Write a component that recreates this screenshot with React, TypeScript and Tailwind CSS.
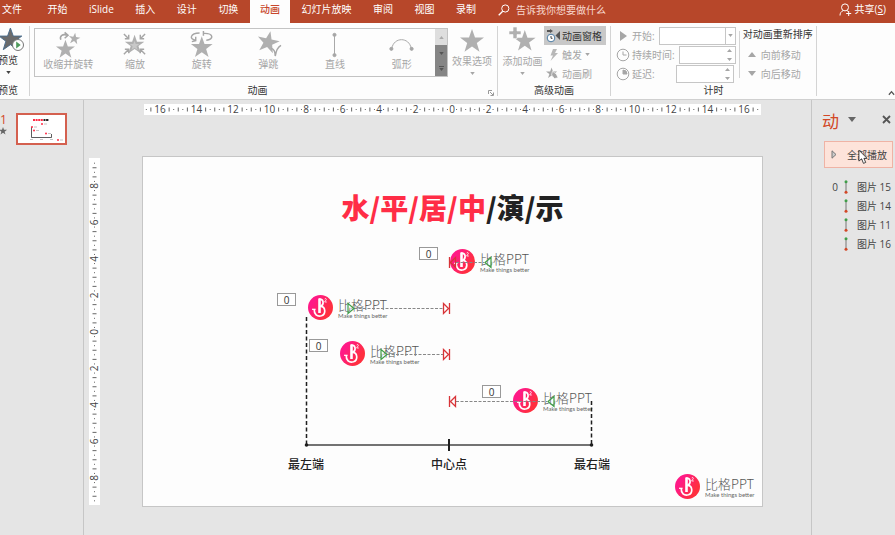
import React from "react";

const STAR = "M12 0l3 8.500h9l-7.200 5.400 2.700 8.900L12 17.500l-7.500 5.300 2.700-8.900L0 8.500h9z";

function Star({ className = "size-5 fill-[#b0b0b0]" }: { className?: string }) {
  return (
    <svg viewBox="0 0 24 24" className={className} aria-hidden="true">
      <path d={STAR} />
    </svg>
  );
}

function Caret({ className = "fill-[#a6a6a6]" }: { className?: string }) {
  return (
    <svg viewBox="0 0 6 4" className={`h-[3px] w-[5px] ${className}`} aria-hidden="true">
      <path d="M0 0h6L3 4z" />
    </svg>
  );
}

/* ---------- Title bar tabs ---------- */

const tabs = ["开始", "iSlide", "插入", "设计", "切换", "动画", "幻灯片放映", "审阅", "视图", "录制"];

function TabBar() {
  return (
    <header className="flex h-[23px] items-stretch bg-[#b7472a] text-white">
      <nav className="flex w-[486px] justify-between">
        <button className="w-[36px] pb-[5px] pl-[2px] text-left">文件</button>
        {tabs.map((tab) => (
          <button
            key={tab}
            className={
              tab === "动画"
                ? "bg-[#fdfdfd] px-[10px] pb-[5px] font-medium text-[#c8472c]"
                : "px-[10px] pb-[5px]"
            }
          >
            {tab}
          </button>
        ))}
      </nav>
      <label className="ml-[12px] flex items-center gap-[6px] pb-[4px]">
        <svg viewBox="0 0 12 12" className="size-[12px] fill-none stroke-white" aria-hidden="true">
          <circle cx="7.3" cy="4.5" r="3.6" />
          <path d="M4.7 7.2L.7 11.3" strokeWidth="1.3" />
        </svg>
        <input
          className="w-[100px] bg-transparent text-white outline-none placeholder:text-[#f7d8cf] placeholder:opacity-100"
          placeholder="告诉我你想要做什么"
        />
      </label>
      <button className="mr-[9px] ml-auto flex items-center gap-[3px] pb-[5px]">
        <svg viewBox="0 0 13 13" className="size-[13px] fill-none stroke-white" aria-hidden="true">
          <circle cx="6" cy="4.4" r="3.5" />
          <path d="M1 12.5c0-2.500 1.200-4 3-4.800M8 7.600l1.500 1M9.700 8v5M7.200 10.500h5" />
        </svg>
        <span>
          共享(<u>S</u>)
        </span>
      </button>
    </header>
  );
}

/* ---------- Ribbon ---------- */

function ShrinkTurnIcon() {
  return (
    <svg viewBox="0 0 28 28" className="size-[27px] fill-[#b0b0b0]" aria-hidden="true">
      <g transform="translate(1 9) scale(.82)"><path d={STAR} /></g>
      <g transform="translate(15 1) rotate(8) scale(.5)"><path d={STAR} /></g>
      <path d="M6 9c-1.500-4 2-6.500 7-4.500M10 1.500l3.500 3L10 7.500" className="fill-none stroke-[#a6a6a6]" strokeWidth="1.600" />
    </svg>
  );
}

function ZoomIcon() {
  return (
    <svg viewBox="0 0 28 28" className="size-[27px] fill-[#b0b0b0]" aria-hidden="true">
      <g transform="translate(4 4) scale(.84)"><path d={STAR} /></g>
      <g transform="translate(9 10) scale(.42)" className="fill-[#c8c8c8]"><path d={STAR} /></g>
      <path
        d="M3 3l5 5M8 4v4H4M25 3l-5 5M20 4v4h4M3 24l5-5M8 23v-4H4M25 24l-5-5M20 23v-4h4"
        className="fill-none stroke-[#a6a6a6]"
        strokeWidth="1.500"
      />
    </svg>
  );
}

function SpinIcon() {
  return (
    <svg viewBox="0 0 28 28" className="size-[27px] fill-[#b0b0b0]" aria-hidden="true">
      <g transform="translate(3 5.500) scale(.94)"><path d={STAR} /></g>
      <path
        d="M12 2C2 2 1 9 8 9.500M8 6v4l-4 1M16 2.500C27 2 27 9 19 9.500M16 0v5"
        className="fill-none stroke-[#a6a6a6]"
        strokeWidth="1.500"
      />
    </svg>
  );
}

function BounceIcon() {
  return (
    <svg viewBox="0 0 28 28" className="size-[27px] fill-[#b0b0b0]" aria-hidden="true">
      <g transform="translate(2 0) rotate(12 12 12) scale(.96)"><path d={STAR} /></g>
      <path d="M17 18c3 1 4 4 4 8 1-6 4-10 6-11" className="fill-none stroke-[#a6a6a6]" strokeWidth="1.500" />
    </svg>
  );
}

function LineIcon() {
  return (
    <svg viewBox="0 0 28 28" className="size-[27px] fill-[#a6a6a6] stroke-[#a6a6a6]" aria-hidden="true">
      <path d="M14 4v20" />
      <circle cx="14" cy="4" r="1.600" />
      <circle cx="14" cy="25" r="1.600" />
    </svg>
  );
}

function ArcIcon() {
  return (
    <svg viewBox="0 0 28 28" className="size-[27px] stroke-[#a6a6a6]" aria-hidden="true">
      <path d="M4 18c2-12 18-12 20 0" fill="none" />
      <circle cx="3.500" cy="18.500" r="1.600" className="fill-[#a6a6a6]" />
      <circle cx="24.500" cy="18.500" r="1.600" className="fill-[#a6a6a6]" />
    </svg>
  );
}

const gallery = [
  { name: "收缩并旋转", Icon: ShrinkTurnIcon },
  { name: "缩放", Icon: ZoomIcon },
  { name: "旋转", Icon: SpinIcon },
  { name: "弹跳", Icon: BounceIcon },
  { name: "直线", Icon: LineIcon },
  { name: "弧形", Icon: ArcIcon },
];

function Group({ title, className, children }: { title: string; className: string; children: React.ReactNode }) {
  return (
    <section className={`flex shrink-0 flex-col justify-between border-r border-[#d4d4d4] ${className}`}>
      <div className="flex">{children}</div>
      <h2 className="text-center leading-[12px] text-[#333]">{title}</h2>
    </section>
  );
}

function Spinner({ id, className }: { id: string; className: string }) {
  return (
    <span className={`flex h-[18px] items-center border border-[#c6c6c6] bg-white pr-[3px] ${className}`}>
      <input id={id} disabled className="w-full min-w-0 flex-1 bg-transparent" />
      <svg viewBox="0 0 5 12" className="h-[12px] w-[5px] fill-[#a6a6a6]" aria-hidden="true">
        <path d="M0 3h5L2.500 0zM0 9h5L2.500 12z" />
      </svg>
    </span>
  );
}

function Ribbon() {
  return (
    <div className="flex h-[77px] border-b border-[#d0d0d0] bg-[#fdfdfd] pt-[3px] pb-[3px] text-[#a6a6a6]">
      <Group title="预览" className="w-[30px] pr-[12px] [&>h2]:-ml-[2px] [&>h2]:whitespace-nowrap">
        <button className="-ml-[2px] flex w-[20px] flex-col items-center whitespace-nowrap text-[#333]">
          <svg viewBox="0 0 27 27" className="-mr-[6px] size-[27px]" aria-hidden="true">
            <g transform="translate(1 2) scale(.95)"><path d={STAR} fill="#6b6b6b" stroke="#4a6d8c" /></g>
            <circle cx="20" cy="19" r="5.500" fill="#fff" stroke="#777" />
            <path d="M18.200 15.500v7l4.500-3.500z" fill="#4f9a5c" />
          </svg>
          <span className="leading-[14px]">预览</span>
          <Caret className="mt-[4px] fill-[#444]" />
        </button>
      </Group>

      <Group title="动画" className="relative w-[468px] [&>h2]:pr-[12px]">
        <div className="mt-[2px] ml-[4px] flex h-[49px] w-[414px] border border-[#c3c3c3]">
          <div className="grid flex-1 grid-cols-6">
            {gallery.map(({ name, Icon }) => (
              <button key={name} className="flex flex-col items-center pt-[2px] whitespace-nowrap">
                <Icon />
                <span className="leading-[12px]">{name}</span>
              </button>
            ))}
          </div>
          <div className="flex w-[12px] flex-col bg-[#858585]">
            <button aria-label="向上滚动" className="flex h-[16px] items-center justify-center bg-[#dedede]">
              <Caret className="rotate-180 fill-[#aaa]" />
            </button>
            <button aria-label="向下滚动" className="flex h-[16px] items-center justify-center">
              <Caret className="fill-[#555]" />
            </button>
            <button aria-label="更多动画" className="flex flex-1 flex-col items-center justify-center gap-px">
              <span className="h-px w-[5px] bg-[#555]" />
              <Caret className="fill-[#555]" />
            </button>
          </div>
        </div>
        <button className="ml-[3px] flex w-[42px] flex-col items-center whitespace-nowrap">
          <Star className="mt-[3px] mb-px size-[24px] fill-[#b0b0b0]" />
          <span className="leading-[14px]">效果选项</span>
          <Caret className="mt-[4px] fill-[#a6a6a6]" />
        </button>
        <button aria-label="动画设置" className="absolute right-[3px] bottom-0">
          <svg viewBox="0 0 6 6" className="size-[6px] fill-none stroke-[#999]" aria-hidden="true">
            <path d="M.5 4V.5H4M2 2l3 3M5.500 2.500v3h-3" />
          </svg>
        </button>
      </Group>

      <Group title="高级动画" className="w-[113px]">
        <button className="ml-[4px] flex w-[41px] flex-col items-center whitespace-nowrap">
          <svg viewBox="0 0 28 28" className="size-[28px] fill-[#b0b0b0]" aria-hidden="true">
            <g transform="translate(5 4) scale(.9)"><path d={STAR} /></g>
            <path d="M4 1h4v4h4v3.500H8v4H4v-4H0V5h4z" stroke="#fdfdfd" strokeWidth=".6" />
          </svg>
          <span className="leading-[14px]">添加动画</span>
          <Caret className="mt-[4px] fill-[#a6a6a6]" />
        </button>
        <div className="ml-px flex flex-col">
          <button className="flex h-[19px] w-[62px] items-center gap-[2px] bg-[#c8c8c8] pl-[2px] whitespace-nowrap text-[#333]">
            <svg viewBox="0 0 14 14" className="size-[14px]" aria-hidden="true">
              <path d="M1 1h3V0l3 2-3 2V3H1z" fill="#555" />
              <path d="M14 2v9L9.500 6.500z" fill="#555" />
              <circle cx="5" cy="9" r="3.800" fill="#fff" stroke="#4b7ba3" />
              <path d="M5 7v2.300h1.500" fill="none" stroke="#444" />
            </svg>
            动画窗格
          </button>
          <button className="flex h-[19px] items-center gap-[3px] pl-[5px]">
            <svg viewBox="0 0 10 12" className="h-[12px] w-[10px] fill-[#b8b8b8]" aria-hidden="true">
              <path d="M4 0h4L6 4h3L1.500 12 4 6.500H1.500z" />
            </svg>
            触发
            <Caret />
          </button>
          <button className="flex h-[19px] items-center gap-[3px] pl-[2px]">
            <svg viewBox="0 0 14 13" className="h-[13px] w-[13px] fill-[#a6a6a6]" aria-hidden="true">
              <g transform="scale(.5)"><path d={STAR} /></g>
              <path d="M7 4l4 3 2 4-4 1-3-4z" stroke="#fdfdfd" strokeWidth=".7" />
            </svg>
            动画刷
          </button>
        </div>
      </Group>

      <Group title="计时" className="w-[206px]">
        <div className="flex flex-col pl-[5px]">
          <div className="flex h-[19px] items-center">
            <svg viewBox="0 0 14 14" className="mr-[2px] size-[14px] fill-[#a6a6a6]" aria-hidden="true">
              <path d="M4 2l7 5-7 5z" />
            </svg>
            <label htmlFor="start" className="mr-auto">开始:</label>
            <select
              id="start"
              disabled
              className="h-[18px] w-[77px] appearance-none border border-[#c6c6c6] bg-white"
            />
            <span className="-ml-[11px] flex h-[18px] w-[11px] items-center justify-center border border-[#c6c6c6]">
              <Caret />
            </span>
          </div>
          <div className="flex h-[19px] items-center">
            <svg viewBox="0 0 14 14" className="mr-[2px] size-[14px] fill-none stroke-[#a6a6a6]" aria-hidden="true">
              <circle cx="7" cy="7" r="5.800" />
              <path d="M7 3.500V7h3.500" />
            </svg>
            <label htmlFor="duration" className="mr-[4px]">持续时间:</label>
            <Spinner id="duration" className="w-[57px]" />
          </div>
          <div className="flex h-[19px] items-center">
            <svg viewBox="0 0 14 14" className="mr-[2px] size-[14px] fill-none stroke-[#a6a6a6]" aria-hidden="true">
              <circle cx="7" cy="7" r="5.800" />
              <path d="M7 3v4h4a4 4 0 0 0-4-4z" fill="#a6a6a6" />
            </svg>
            <label htmlFor="delay" className="mr-auto">延迟:</label>
            <Spinner id="delay" className="mr-[2px] w-[58px]" />
          </div>
        </div>
        <div className="my-[5px] ml-[3px] w-px bg-[#d4d4d4]" />
        <div className="ml-[3px] flex flex-col whitespace-nowrap">
          <h3 className="h-[19px] leading-[17px] text-[#333]">对动画重新排序</h3>
          <button className="flex h-[19px] items-center gap-[5px] pl-[5px]">
            <svg viewBox="0 0 8 5" className="h-[5px] w-[8px] fill-[#a6a6a6]" aria-hidden="true"><path d="M0 5h8L4 0z" /></svg>
            向前移动
          </button>
          <button className="flex h-[19px] items-center gap-[5px] pl-[5px]">
            <svg viewBox="0 0 8 5" className="h-[5px] w-[8px] fill-[#a6a6a6]" aria-hidden="true"><path d="M0 0h8L4 5z" /></svg>
            向后移动
          </button>
        </div>
      </Group>

      <button aria-label="折叠功能区" className="mt-auto ml-auto shrink-0">
        <svg viewBox="0 0 8 6" className="h-[6px] w-[7px] fill-none stroke-[#555]" strokeWidth="1.500" aria-hidden="true">
          <path d="M1 5l3-3.500L7 5" />
        </svg>
      </button>
    </div>
  );
}

/* ---------- Rulers ---------- */

const CM = 18.25;

function Ruler({ length, origin, vertical = false }: { length: number; origin: number; vertical?: boolean }) {
  const marks: React.ReactNode[] = [];
  for (let q = -68; q <= 68; q++) {
    const p = origin + (q * CM) / 4;
    if (p < 1 || p > length - 1) continue;
    if (q % 8 === 0) {
      const n = Math.abs(q / 4);
      marks.push(
        vertical ? (
          <text key={q} transform={`translate(9 ${p}) rotate(-90)`} textAnchor="middle">{n}</text>
        ) : (
          <text key={q} x={p} y="9" textAnchor="middle">{n}</text>
        ),
      );
      continue;
    }
    // Two-digit labels are wide enough to cover the dots beside them.
    if (Math.abs(q) > 36 && !vertical && (Math.abs(q % 8) === 1 || Math.abs(q % 8) === 7)) continue;
    const half = q % 2 === 0 ? 2 : 0.5;
    marks.push(
      <path key={q} stroke="#666" d={vertical ? `M${5.5 - half} ${p}h${half * 2}` : `M${p} ${5.5 - half}v${half * 2}`} />,
    );
  }
  return (
    <svg
      width={vertical ? 11 : length}
      height={vertical ? length : 11}
      className="shrink-0 overflow-visible bg-white fill-[#444] text-[10px]"
      aria-hidden="true"
    >
      {marks}
    </svg>
  );
}

/* ---------- Slide ---------- */

function LogoMark() {
  return (
    <svg viewBox="0 0 25 25" className="size-[25px] shrink-0" aria-hidden="true">
      <defs>
        <linearGradient id="brand" x1="0" y1="0.2" x2="1" y2="0.8">
          <stop offset="0.2" stopColor="#ff1a86" />
          <stop offset="0.8" stopColor="#ff2f3f" />
        </linearGradient>
      </defs>
      <circle cx="12.500" cy="12.500" r="12.500" fill="url(#brand)" />
      <g fill="none" stroke="#fff">
        <path d="M11.500 3.500V18" strokeWidth="2.600" />
        <path d="M11 4.200c5-.8 5.500 5.800 1 7.300 5.500-.6 6.500 7.500 1.500 9.300-4.500 1.400-7.500-1.500-7.300-6.800" strokeWidth="1.700" />
        <path d="M4 14.300h3.600" strokeWidth="1.200" />
        <path d="M16.600 4.200c.6-1.200 2.200-.6 1.600.6L16.600 7h2.200" strokeWidth=".8" />
      </g>
    </svg>
  );
}

function Logo({ className }: { className: string }) {
  return (
    <div className={`absolute flex items-center gap-[5px] whitespace-nowrap ${className}`}>
      <LogoMark />
      <div className="font-['Noto_Sans_CJK_SC',sans-serif] font-light">
        <p className="text-[13px] leading-[15px] text-[#555]">比格PPT</p>
        <p className="font-[Lato,sans-serif] text-[6px] leading-[7px] font-normal text-[#666]">Make things better</p>
      </div>
    </div>
  );
}

function Tag({ className }: { className: string }) {
  return (
    <span
      className={`absolute flex h-[13px] w-[19px] items-center justify-center border border-[#999] bg-white text-[#333] ${className}`}
    >
      0
    </span>
  );
}

function MotionPaths() {
  const leftEnd = "M.5-5.500v11M6.500-5l-5 5 5 5z";
  const rightEnd = "M6.500-5.500v11M.5-5l5 5-5 5z";
  return (
    <svg viewBox="0 0 619 349" className="absolute inset-0 h-[349px] w-[619px] fill-none" aria-hidden="true">
      <g stroke="#1f1f1f">
        <path d="M163.500 160v127M448.500 244v43" strokeWidth="1.500" strokeDasharray="4 2.500" />
        <path d="M163 288h286" stroke="#444" strokeWidth="1.500" />
        <path d="M306 282v12" strokeWidth="2" />
        <circle cx="163.500" cy="288" r="1.800" fill="#1f1f1f" stroke="none" />
        <circle cx="448.500" cy="288" r="1.800" fill="#1f1f1f" stroke="none" />
      </g>
      <path
        d="M313 105.500h28M211 151.500h89M244 197.500h56M313 244.500h91"
        stroke="#888"
        strokeDasharray="3 1.500"
      />
      <g stroke="#d83438" strokeWidth="1.300">
        <path d={leftEnd} transform="translate(306 105.500)" />
        <path d={rightEnd} transform="translate(300 151.500)" />
        <path d={rightEnd} transform="translate(300 197.500)" />
        <path d={leftEnd} transform="translate(306 244.500)" />
      </g>
      <g stroke="#3f9e48" strokeWidth="1.200">
        <path d="M348 100.500v10l-6-5z" />
        <path d="M205 146.500v10l6-5z" />
        <path d="M238 192.500v10l6-5z" />
        <path d="M411 239.500v10l-6-5z" />
      </g>
    </svg>
  );
}

function Slide() {
  return (
    <article className="relative h-[351px] w-[621px] shrink-0 border border-[#c6c6c6] bg-[#fdfdfd]">
      <h1 className="pt-[30px] text-center font-['Noto_Sans_CJK_SC',sans-serif] text-[28px] leading-[40px] font-black text-[#222]">
        <span className="text-[#ff2d46]">水/平/居/中</span>/演/示
      </h1>
      <Logo className="top-[92px] left-[307px]" />
      <Logo className="top-[138px] left-[165px]" />
      <Logo className="top-[184px] left-[197px]" />
      <Logo className="top-[231px] left-[370px]" />
      <Logo className="top-[317px] left-[532px]" />
      <MotionPaths />
      <Tag className="top-[90px] left-[276px]" />
      <Tag className="top-[136px] left-[134px]" />
      <Tag className="top-[182px] left-[166px]" />
      <Tag className="top-[228px] left-[339px]" />
      <div className="absolute top-[300px] left-[145px] flex w-[322px] justify-between text-[12px] leading-[16px] font-medium text-[#222]">
        <span>最左端</span>
        <span>中心点</span>
        <span>最右端</span>
      </div>
    </article>
  );
}

/* ---------- Side panes ---------- */

function Thumbnails() {
  return (
    <aside className="flex w-[84px] shrink-0 items-start border-r border-[#c6c6c6] pt-[13px]">
      <div className="flex w-[16px] flex-col text-[12px] leading-[14px] text-[#d24726]">
        <span>1</span>
        <Star className="-ml-px size-[8px] fill-[#666]" />
      </div>
      <button aria-label="幻灯片 1" className="border-2 border-[#d4604f] bg-white">
        <svg viewBox="0 0 47 28" className="h-[28px] w-[47px]" aria-hidden="true">
          <g strokeWidth="2.200">
            <path d="M15 5h10" stroke="#ff2d46" strokeDasharray="2 .6" />
            <path d="M25.500 5h5.500" stroke="#222" strokeDasharray="2 .6" />
          </g>
          <path d="M13.500 12v10.500h20V19" fill="none" stroke="#333" strokeWidth=".8" />
          <g fill="#ff2d46">
            <circle cx="24" cy="9" r="1" />
            <circle cx="14" cy="12" r="1" />
            <circle cx="16" cy="15.500" r="1" />
            <circle cx="28" cy="18.500" r="1" />
            <circle cx="40" cy="25" r="1" />
          </g>
          <path d="M26 9h3M16 12h3M18 15.500h3M30 18.500h3M42 25h3M12 24.500h3M22 24.500h3M32 24.500h3" stroke="#aaa" strokeWidth=".7" />
        </svg>
      </button>
    </aside>
  );
}

const effects = [
  { order: "0", name: "图片 15" },
  { order: "", name: "图片 14" },
  { order: "", name: "图片 11" },
  { order: "", name: "图片 16" },
];

function AnimationPane() {
  return (
    <aside className="w-[84px] shrink-0 border-l border-[#c6c6c6] pt-[10px] text-[#444]">
      <div className="flex h-[24px] items-center pr-[4px] pl-[10px]">
        <h2 className="text-[17px] leading-[24px] text-[#d24726]">动</h2>
        <button aria-label="窗格选项" className="ml-[9px] pb-[6px]">
          <svg viewBox="0 0 8 5" className="h-[5px] w-[8px] fill-[#666]" aria-hidden="true"><path d="M0 0h8L4 5z" /></svg>
        </button>
        <button aria-label="关闭" className="ml-auto pb-[6px]">
          <svg viewBox="0 0 9 9" className="size-[9px] stroke-[#555]" strokeWidth="1.800" aria-hidden="true">
            <path d="M1 1l7 7M8 1L1 8" />
          </svg>
        </button>
      </div>
      <button className="relative mt-[7px] ml-[12px] flex h-[27px] w-[69px] items-center border border-[#efb3a5] bg-[#fde3da] pl-[6px] whitespace-nowrap">
        <svg viewBox="0 0 6 9" className="mr-[10px] h-[9px] w-[6px] fill-[#ccc] stroke-[#777]" aria-hidden="true">
          <path d="M1 .8v7.400l4-3.700z" />
        </svg>
        全部播放
        <svg viewBox="0 0 11 17" className="absolute top-[7px] left-[33px] h-[16px] w-[10px]" aria-hidden="true">
          <path d="M1 1v12l3-2.500 2 5 2.500-1-2-4.500H10z" fill="#fff" stroke="#333" />
        </svg>
      </button>
      <ul className="mt-[9px]">
        {effects.map((e) => (
          <li key={e.name} className="flex h-[19px] items-center whitespace-nowrap">
            <span className="w-[26px] text-right">{e.order}</span>
            <svg viewBox="0 0 4 14" className="ml-[6px] h-[14px] w-[4px]" aria-hidden="true">
              <path d="M2 2v10" stroke="#777" />
              <circle cx="2" cy="1.800" r="1.500" fill="#3f9e48" />
              <circle cx="2" cy="12.200" r="1.500" fill="#d24726" />
            </svg>
            <span className="ml-[9px]">{e.name}</span>
          </li>
        ))}
      </ul>
    </aside>
  );
}

export default function App() {
  return (
    <div className="flex min-h-screen flex-col overflow-hidden bg-[#e5e5e5] font-['Open_Sans','Noto_Sans_CJK_SC',sans-serif] text-[10px] leading-[16px]">
      <TabBar />
      <Ribbon />
      <main className="flex flex-1">
        <Thumbnails />
        <div className="flex min-w-0 flex-1 items-end pb-[28px] pl-[5px]">
          <div className="pb-[2px]">
            <Ruler vertical length={347} origin={174} />
          </div>
          <div className="flex flex-1 flex-col items-center gap-[41px] self-start pt-[4px] pr-[6px]">
            <Ruler length={617} origin={308} />
            <Slide />
          </div>
        </div>
        <AnimationPane />
      </main>
    </div>
  );
}
